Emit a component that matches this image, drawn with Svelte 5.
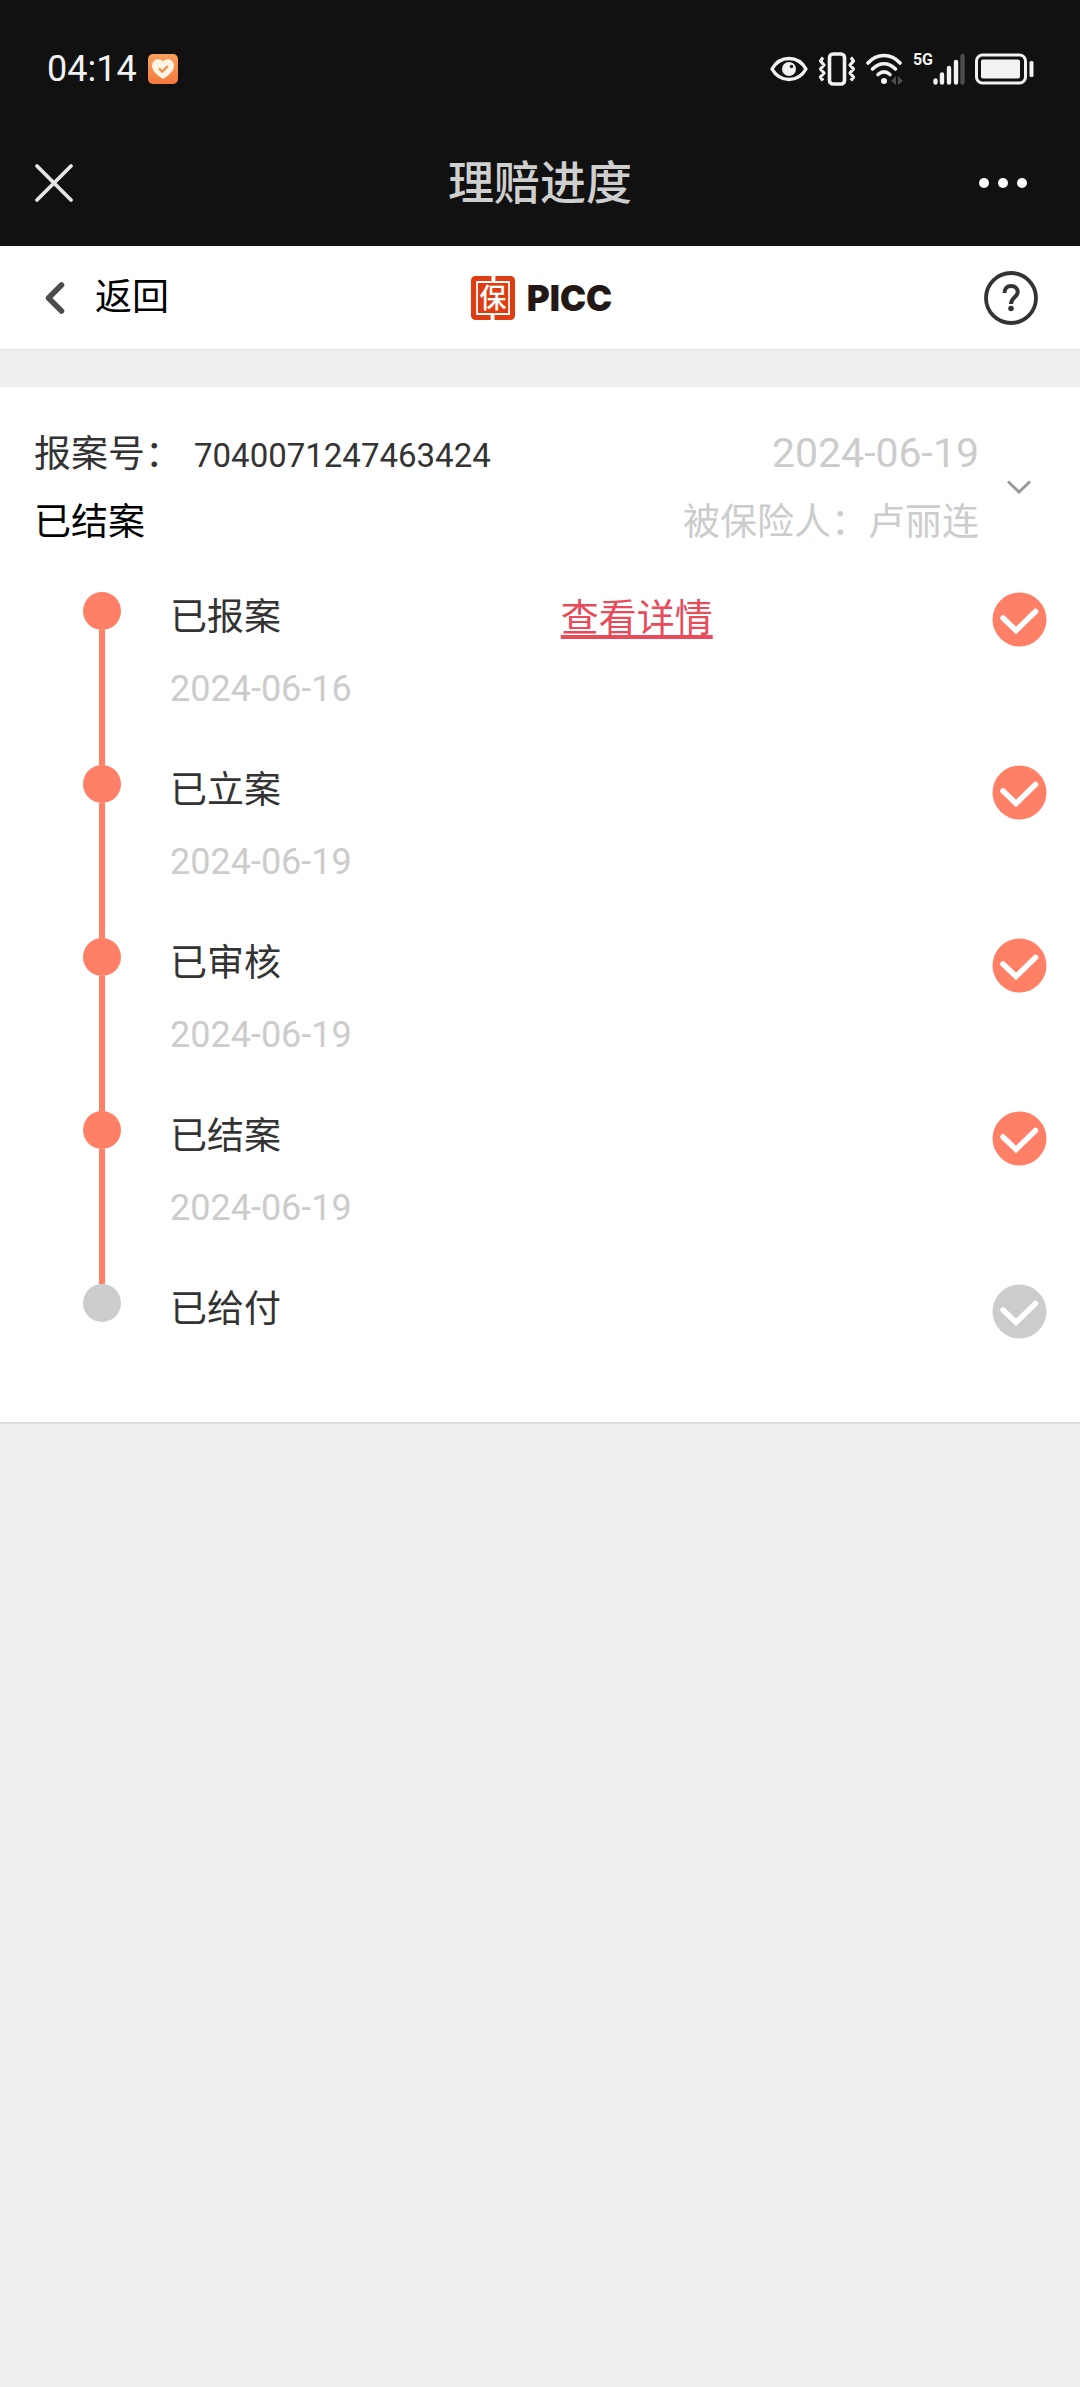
<script lang="ts">
  type Step = {
    title: string;
    date?: string;
    done: boolean;
    link?: string;
  };

  const claim = {
    number: "7040071247463424",
    status: "已结案",
    date: "2024-06-19",
    insured: "卢丽连",
  };

  const steps: Step[] = [
    { title: "已报案", date: "2024-06-16", done: true, link: "查看详情" },
    { title: "已立案", date: "2024-06-19", done: true },
    { title: "已审核", date: "2024-06-19", done: true },
    { title: "已结案", date: "2024-06-19", done: true },
    { title: "已给付", done: false },
  ];

  let open = $state(true);
</script>

<div class="status-bar">
  <div class="status-left">
    <span>04:14</span>
    <svg width="30" height="30" viewBox="0 0 30 30" aria-hidden="true">
      <defs>
        <linearGradient id="badge" x1="0" y1="0" x2="0" y2="1">
          <stop offset="0" stop-color="#f9a05c" />
          <stop offset="1" stop-color="#f4793f" />
        </linearGradient>
      </defs>
      <rect width="30" height="30" rx="5" fill="url(#badge)" />
      <path d="M15 7.500C17.500 4.500 21 4.600 23.500 6.500C26.500 9 26.600 13 24.500 16.500C22.500 20 18.500 23 15 25C11.500 23 7.500 20 5.500 16.500C3.400 13 3.500 9 6.500 6.500C9 4.600 12.500 4.500 15 7.500Z" fill="#fff5e4" />
      <path d="M11 14.500L14.300 17.700L19.800 12" fill="none" stroke="#f58a4a" stroke-width="2.200" />
    </svg>
  </div>
  <div class="status-right">
    <svg width="38" height="26" viewBox="0 0 38 26" aria-hidden="true">
      <path d="M2 13C6 6 12 2.500 19 2.500S32 6 36 13C32 20 26 23.500 19 23.500S6 20 2 13Z" fill="none" stroke="#f2f2f2" stroke-width="3.400" stroke-linejoin="round" />
      <circle cx="19" cy="13" r="7" fill="#f2f2f2" />
      <circle cx="21.500" cy="10.500" r="1.700" fill="#111" />
    </svg>
    <svg width="38" height="34" viewBox="0 0 38 34" fill="none" stroke="#f2f2f2" aria-hidden="true">
      <rect x="11.500" y="2" width="15" height="30" rx="3.500" stroke-width="3.600" />
      <path d="M5 5.500L2.500 9L6 13L2.500 17L6 21L2.500 25L5 28.500M33 5.500L35.500 9L32 13L35.500 17L32 21L35.500 25L33 28.500" stroke-width="3.200" stroke-linejoin="round" />
    </svg>
    <svg width="37" height="32" viewBox="0 0 37 32" aria-hidden="true">
      <g fill="none" stroke="#f2f2f2" stroke-width="3.600" stroke-linecap="round">
        <path d="M2 10C11 0 25 0 34 10" />
        <path d="M6.500 16C13.500 9 22.500 9 29.500 16" />
        <path d="M12 21.500C16 18 20 18 24 21.500" />
      </g>
      <circle cx="18" cy="28" r="3" fill="#f2f2f2" />
      <path d="M25 28L30 23V32ZM37 28L32 23V32Z" fill="#4c4c4c" />
    </svg>
    <div class="signal">
      <span>5G</span>
      <svg width="32" height="32" viewBox="0 0 32 32" stroke-width="4.400" stroke-linecap="round" aria-hidden="true">
        <path d="M2.500 27.500V29.500M9 21.500V29.500M16 15V29.500M23 9V29.500" stroke="#f2f2f2" />
        <path d="M29.500 3V29.500" stroke="#4c4c4c" />
      </svg>
    </div>
    <svg width="59" height="32" viewBox="0 0 59 32" aria-hidden="true">
      <rect x="1.500" y="2" width="49" height="28" rx="6" fill="none" stroke="#f2f2f2" stroke-width="3" />
      <rect x="6" y="6.500" width="39" height="19" rx="2" fill="#f2f2f2" />
      <rect x="54.500" y="8" width="4" height="16" rx="1.500" fill="#f2f2f2" />
    </svg>
  </div>
</div>

<header class="title-bar">
  <button type="button" aria-label="关闭">
    <svg width="40" height="40" viewBox="0 0 40 40" fill="none" stroke="#e6e6e6" stroke-width="3.800" stroke-linecap="round" aria-hidden="true">
      <path d="M3 3L37 37M37 3L3 37" />
    </svg>
  </button>
  <h1>理赔进度</h1>
  <button type="button" aria-label="更多">
    <svg width="50" height="12" viewBox="0 0 50 12" fill="#fff" aria-hidden="true">
      <circle cx="6" cy="6" r="5" />
      <circle cx="25" cy="6" r="5" />
      <circle cx="44" cy="6" r="5" />
    </svg>
  </button>
</header>

<nav class="nav-bar">
  <a class="back" href="#back">
    <svg width="20" height="32" viewBox="0 0 20 32" fill="none" stroke="#4d4d4d" stroke-width="5.500" stroke-linecap="round" stroke-linejoin="round" aria-hidden="true">
      <path d="M16.500 3L3.500 16L16.500 29" />
    </svg>
    返回
  </a>
  <div class="brand">
    <svg width="44" height="44" viewBox="0 0 44 44" aria-hidden="true">
      <rect width="44" height="44" rx="4.500" fill="#e03c12" />
      <path d="M20.500 6H6V38H20.500V44M23.500 0V6H38V38H23.500" fill="none" stroke="#fff" stroke-width="1.800" />
      <path d="M22 0V6.800M22 37.200V44" stroke="#fff" stroke-width="3" />
      <text class="seal" x="22" y="32" text-anchor="middle">保</text>
    </svg>
    <span>PICC</span>
  </div>
  <button type="button" aria-label="帮助">
    <svg width="54" height="54" viewBox="0 0 54 54" fill="none" stroke="#333" aria-hidden="true">
      <circle cx="27" cy="27" r="25" stroke-width="3.800" />
      <path d="M20.500 22C20.500 17.500 23 15 27 15C31 15 33.700 17.500 33.700 21C33.700 26 27 26.500 27 33" stroke-width="4" />
      <circle cx="27" cy="37.500" r="2.800" fill="#333" stroke="none" />
    </svg>
  </button>
</nav>

<main class="card">
  <section class="summary">
    <div class="rows">
      <div class="row">
        <span class="label">报案号：</span>
        <span class="number">{claim.number}</span>
        <time class="muted right">{claim.date}</time>
      </div>
      <div class="row">
        <strong>{claim.status}</strong>
        <span class="muted right">被保险人：{claim.insured}</span>
      </div>
    </div>
    <button type="button" aria-label="展开" aria-expanded={open} onclick={() => (open = !open)}>
      <svg width="24" height="14" viewBox="0 0 24 14" fill="none" stroke="#999" stroke-width="3" aria-hidden="true">
        <path d="M1 1.500L12 12L23 1.500" />
      </svg>
    </button>
  </section>

  {#if open}
    <ol class="steps">
      {#each steps as step}
        <li class="step" class:done={step.done}>
          <div class="rail"><i class="dot"></i></div>
          <div class="body">
            <div>
              <h2>{step.title}</h2>
              {#if step.date}
                <time>{step.date}</time>
              {/if}
            </div>
            {#if step.link}
              <a href="#detail">{step.link}</a>
            {/if}
          </div>
          <svg class="check" width="55" height="55" viewBox="0 0 55 55" aria-hidden="true">
            <circle cx="27.500" cy="27.500" r="27" fill="currentColor" />
            <path d="M11 26L24 38.500L43.500 19.500" fill="none" stroke="#fff" stroke-width="5.500" stroke-linecap="round" />
          </svg>
        </li>
      {/each}
    </ol>
  {/if}
</main>

<style>
  :global(body) {
    background: #efefef;
    font-family: Roboto, "Noto Sans CJK SC", sans-serif;
    color: #333;
  }

  h1,
  h2,
  ol {
    margin: 0;
    padding: 0;
    font-weight: 400;
  }

  button {
    display: flex;
    padding: 0;
    border: 0;
    background: none;
    cursor: pointer;
  }

  svg {
    display: block;
    flex: none;
  }

  /* Phone status bar */
  .status-bar {
    display: flex;
    align-items: center;
    justify-content: space-between;
    box-sizing: border-box;
    height: 120px;
    padding: 18px 46px 0 47px;
    background: #111;
    color: #f2f2f2;
    font-size: 36px;
  }

  .status-left {
    display: flex;
    align-items: center;
    gap: 11px;
  }

  .status-right {
    display: flex;
    align-items: center;
    gap: 10px;
  }

  .signal {
    display: flex;
    align-items: flex-start;
  }

  .signal span {
    font-size: 16px;
    font-weight: 700;
    line-height: 14px;
  }

  /* Title */
  .title-bar {
    display: grid;
    grid-template-columns: 1fr auto 1fr;
    align-items: center;
    height: 126px;
    padding: 0 52px 0 34px;
    background: #111;
    color: #cfcfcf;
  }

  .title-bar h1 {
    padding-left: 18px;
    font-size: 46px;
    font-weight: 500;
    line-height: 60px;
  }

  .title-bar button:last-child {
    justify-self: end;
  }

  /* Site navigation */
  .nav-bar {
    display: grid;
    grid-template-columns: 1fr auto 1fr;
    align-items: center;
    height: 103px;
    padding: 0 42px 0 45px;
    border-bottom: 1px solid #e4e4e4;
    background: #fff;
  }

  .back {
    display: flex;
    align-items: center;
    gap: 30px;
    color: #000;
    font-size: 37px;
    line-height: 52px;
    text-decoration: none;
  }

  .brand {
    display: flex;
    align-items: center;
    gap: 12px;
    color: #231815;
    font-family: Inter, sans-serif;
    font-size: 35px;
    font-weight: 900;
  }

  .seal {
    fill: #fff;
    font-family: "Noto Sans CJK SC", sans-serif;
    font-size: 27px;
    font-weight: 500;
  }

  .nav-bar button {
    justify-self: end;
  }

  /* Claim */
  .card {
    margin-top: 37px;
    padding: 30px 33px 54px 34px;
    border-bottom: 2px solid #dcdcdc;
    background: #fff;
    font-size: 37px;
  }

  .summary {
    display: flex;
    align-items: center;
    gap: 28px;
    padding-right: 16px;
  }

  .rows {
    flex: 1;
  }

  .row {
    display: flex;
    align-items: baseline;
    height: 70px;
    line-height: 72px;
  }

  .row strong {
    color: #000;
    font-weight: 400;
  }

  .number {
    margin-left: 12px;
    font-size: 33px;
  }

  .muted {
    color: #ccc;
  }

  .right {
    margin-left: auto;
  }

  .row time {
    font-size: 41px;
  }

  /* Timeline */
  .steps {
    padding-top: 35px;
    list-style: none;
  }

  .step {
    display: flex;
    gap: 8px;
    min-height: 173px;
    color: #ccc;
  }

  .step:last-child {
    min-height: 84px;
  }

  .step.done {
    color: #ff8066;
  }

  .rail {
    display: flex;
    flex-direction: column;
    align-items: center;
    width: 38px;
    margin: 0 41px 0 49px;
  }

  .dot {
    width: 38px;
    height: 38px;
    border-radius: 50%;
    background: currentColor;
  }

  .done .rail::after {
    content: "";
    flex: 1;
    width: 6px;
    background: currentColor;
  }

  .body {
    display: grid;
    grid-template-columns: 48% 1fr;
    align-items: start;
    flex: 1;
  }

  .body h2 {
    color: #333;
    font-size: 37px;
    line-height: 52px;
  }

  .body time {
    display: block;
    margin-top: 20px;
    color: #ccc;
    font-size: 36px;
    line-height: 50px;
  }

  .body a {
    justify-self: start;
    color: #e94b5a;
    font-size: 38px;
    line-height: 52px;
    text-decoration-thickness: 4px;
    text-underline-offset: 4px;
  }
</style>
